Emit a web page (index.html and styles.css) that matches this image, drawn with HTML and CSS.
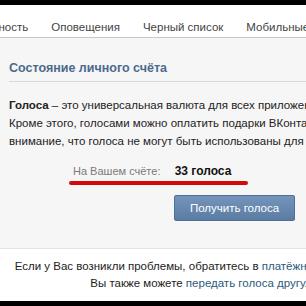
FILE: index.html
```html
<!DOCTYPE html>
<html lang="ru">
<head>
    <meta charset="UTF-8">
    <title>Голоса</title>
    <link rel="stylesheet" href="styles.css">
</head>
<body>
    <div class="topbar"></div>
    <div class="tabs">
        <div class="tab first">Приватность</div>
        <div class="tab">Оповещения</div>
        <div class="tab">Черный список</div>
        <div class="tab">Мобильные</div>
    </div>

    <div class="content">
        <div class="title">Состояние личного счёта</div>
        <div class="info">
            <div class="info-line"><b>Голоса</b> – это универсальная валюта для всех приложений ВКонтакте.</div>
            <div class="info-line">Кроме этого, голосами можно оплатить подарки ВКонтакте. Обратите</div>
            <div class="info-line">внимание, что голоса не могут быть использованы для оплаты рекламы.</div>
        </div>

        <div class="balance">
            <span class="balance-label">На Вашем счёте:</span>
            <span class="balance-value">33 голоса</span>
        </div>
        <div class="underline"></div>

        <div class="actions">
            <button class="btn">Получить голоса</button>
        </div>
    </div>

    <div class="footer">
        <div class="footer-line">Если у Вас возникли проблемы, обратитесь в <a href="#">платёжную поддержку</a>.</div>
        <div class="footer-line">Вы также можете <a href="#">передать голоса другу</a>.</div>
    </div>
    <div class="bottombar"></div>
</body>
</html>
```

FILE: styles.css
```css
body {
    margin: 0;
    width: 306px;
    height: 306px;
    overflow: hidden;
    font-family: "Liberation Sans", Tahoma, sans-serif;
    font-size: 11.5px;
    color: #222;
    background: #fff;
}
.topbar {
    height: 5px;
    background: #000;
}
.tabs {
    display: flex;
    height: 32px;
    align-items: center;
    border-bottom: 1px solid #c9c9c9;
    white-space: nowrap;
    background: #fff;
}
.tab {
    margin-right: 23px;
    color: #444;
    padding-top: 11px;
}
.first {
    margin-left: -40px;
}
.content {
    background: #f6f6f6;
    padding: 23px 0 0 9px;
    height: 187px;
    border-bottom: 1px solid #e3e3e3;
}
.title {
    font-size: 12.5px;
    font-weight: bold;
    color: #4c6a8c;
    padding-bottom: 6px;
    border-bottom: 1px solid #d5d9de;
    white-space: nowrap;
}
.info {
    margin-top: 14px;
    line-height: 18px;
    white-space: nowrap;
}
.balance {
    margin-top: 14px;
    padding-left: 64px;
    white-space: nowrap;
}
.balance-label {
    color: #7a7a7a;
    font-size: 11px;
    margin-right: 11px;
}
.balance-value {
    font-weight: bold;
    font-size: 12px;
    color: #111;
}
.underline {
    margin: 3px 0 0 60px;
    width: 179px;
    height: 4px;
    border-radius: 2px;
    background: #d30a0a;
}
.actions {
    display: flex;
    justify-content: flex-end;
    padding-right: 11px;
    margin-top: 10px;
}
.btn {
    width: 121px;
    height: 26px;
    border: 1px solid #4f6f93;
    border-radius: 2px;
    background: linear-gradient(#7494bb, #5a7ca3);
    color: #fff;
    font-family: "Liberation Sans", Tahoma, sans-serif;
    font-size: 11.5px;
}
.footer {
    height: 52px;
    padding-top: 9px;
    box-sizing: border-box;
    text-align: center;
    white-space: nowrap;
    line-height: 17px;
    margin-left: -81px;
    width: 560px;
}
.footer a {
    color: #2b587a;
    text-decoration: none;
}
.bottombar {
    height: 10px;
    background: #000;
}
```
